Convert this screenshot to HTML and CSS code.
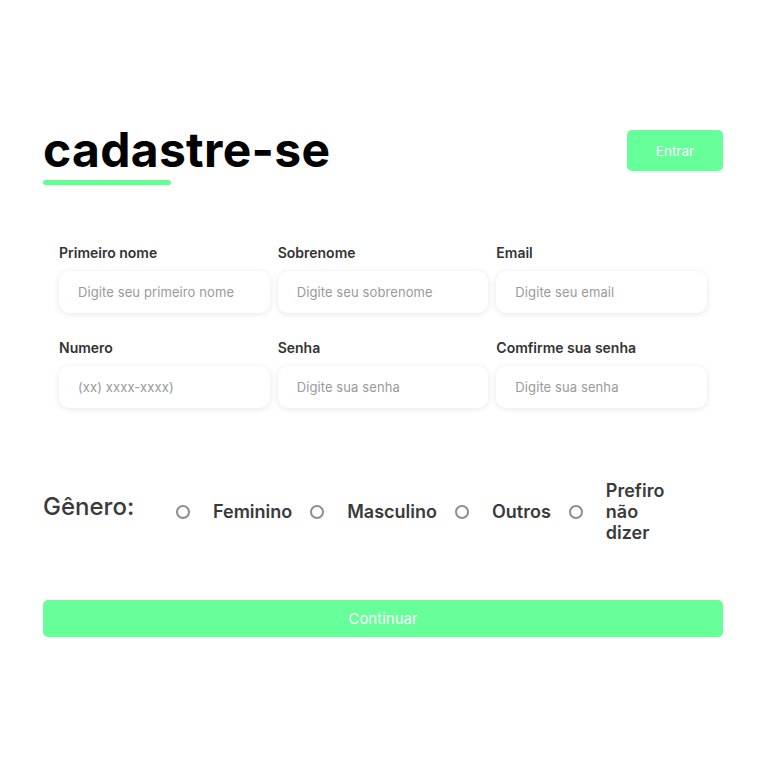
FILE: index.html
```html
<!DOCTYPE html>
<html lang="pt-BR">
<head>
<meta charset="utf-8">
<title>cadastre-se</title>
<link rel="stylesheet" href="styles.css">
</head>
<body>
<main class="page">
  <header class="header">
    <div class="title-block">
      <h1 class="title">cadastre-se</h1>
      <div class="underline"></div>
    </div>
    <button class="btn-entrar" type="button">Entrar</button>
  </header>

  <form class="form">
    <div class="grid">
      <div class="field">
        <label class="label">Primeiro nome</label>
        <input class="input" type="text" placeholder="Digite seu primeiro nome">
      </div>
      <div class="field">
        <label class="label">Sobrenome</label>
        <input class="input" type="text" placeholder="Digite seu sobrenome">
      </div>
      <div class="field">
        <label class="label">Email</label>
        <input class="input" type="text" placeholder="Digite seu email">
      </div>
      <div class="field">
        <label class="label">Numero</label>
        <input class="input" type="text" placeholder="(xx) xxxx-xxxx)">
      </div>
      <div class="field">
        <label class="label">Senha</label>
        <input class="input" type="password" placeholder="Digite sua senha">
      </div>
      <div class="field">
        <label class="label">Comfirme sua senha</label>
        <input class="input" type="password" placeholder="Digite sua senha">
      </div>
    </div>

    <div class="gender">
      <div class="gender-title">Gênero:</div>
      <div class="options">
        <label class="option"><span class="radio"></span><span class="opt-text">Feminino</span></label>
        <label class="option"><span class="radio"></span><span class="opt-text">Masculino</span></label>
        <label class="option"><span class="radio"></span><span class="opt-text">Outros</span></label>
        <label class="option"><span class="radio"></span><span class="opt-text narrow">Prefiro não dizer</span></label>
      </div>
    </div>

    <button class="btn-continuar" type="button">Continuar</button>
  </form>
</main>
</body>
</html>
```

FILE: styles.css
```css
* { box-sizing: border-box; }
html, body { margin: 0; padding: 0; background: #fff; }
body { font-family: Inter, "Noto Sans", sans-serif; color: #333; }

.page {
  width: 680px;
  margin-left: 43px;
  padding-top: 122px;
}

.header {
  display: flex;
  justify-content: space-between;
  align-items: flex-start;
}

.title {
  margin: 0;
  font-size: 48px;
  font-weight: 700;
  line-height: 56px;
  color: #000;
  letter-spacing: 0.3px;
}

.underline {
  width: 128px;
  height: 5px;
  border-radius: 3px;
  background: #63ff94;
  margin-top: 2px;
}

.btn-entrar {
  margin-top: 8px;
  width: 96px;
  height: 41px;
  border: none;
  border-radius: 5px;
  background: #66ff99;
  color: #fff;
  font-family: Inter, sans-serif;
  font-size: 13.5px;
}

.form {
  margin-top: 60px;
}

.grid {
  display: grid;
  grid-template-columns: repeat(3, minmax(0, 1fr));
  column-gap: 8px;
  row-gap: 27px;
  padding: 0 16px;
}

.field {
  display: flex;
  flex-direction: column;
  min-width: 0;
}

.label {
  font-size: 14px;
  font-weight: 600;
  color: #333;
  line-height: 16px;
  margin-bottom: 10px;
}

.input {
  width: 100%;
  min-width: 0;
  height: 42px;
  border: none;
  border-radius: 10px;
  background: #fff;
  box-shadow: 0 1px 6px rgba(0,0,0,0.10);
  padding: 0 19px;
  font-family: Inter, sans-serif;
  font-size: 13px;
  letter-spacing: 0.1px;
  color: #333;
  outline: none;
}
.input::placeholder { color: #9a9a9a; }

.gender {
  margin-top: 72px;
  display: flex;
  align-items: flex-start;
}

.gender-title {
  font-size: 24px;
  font-weight: 500;
  color: #3a3a3a;
  line-height: 29px;
  width: 133px;
  margin-top: 12px;
}

.options {
  display: flex;
  align-items: center;
  gap: 18px;
}

.option {
  display: flex;
  align-items: center;
  gap: 23px;
}

.radio {
  width: 14px;
  height: 14px;
  border: 2px solid #8e8c96;
  border-radius: 50%;
  flex: none;
}

.opt-text {
  font-size: 18px;
  font-weight: 600;
  color: #3a3a3a;
  line-height: 21px;
}

.opt-text.narrow {
  width: 70px;
}

.btn-continuar {
  display: block;
  width: 100%;
  height: 37px;
  margin-top: 57px;
  border: none;
  border-radius: 5px;
  background: #66ff99;
  color: #fff;
  font-family: Inter, sans-serif;
  font-size: 15px;
}
```
